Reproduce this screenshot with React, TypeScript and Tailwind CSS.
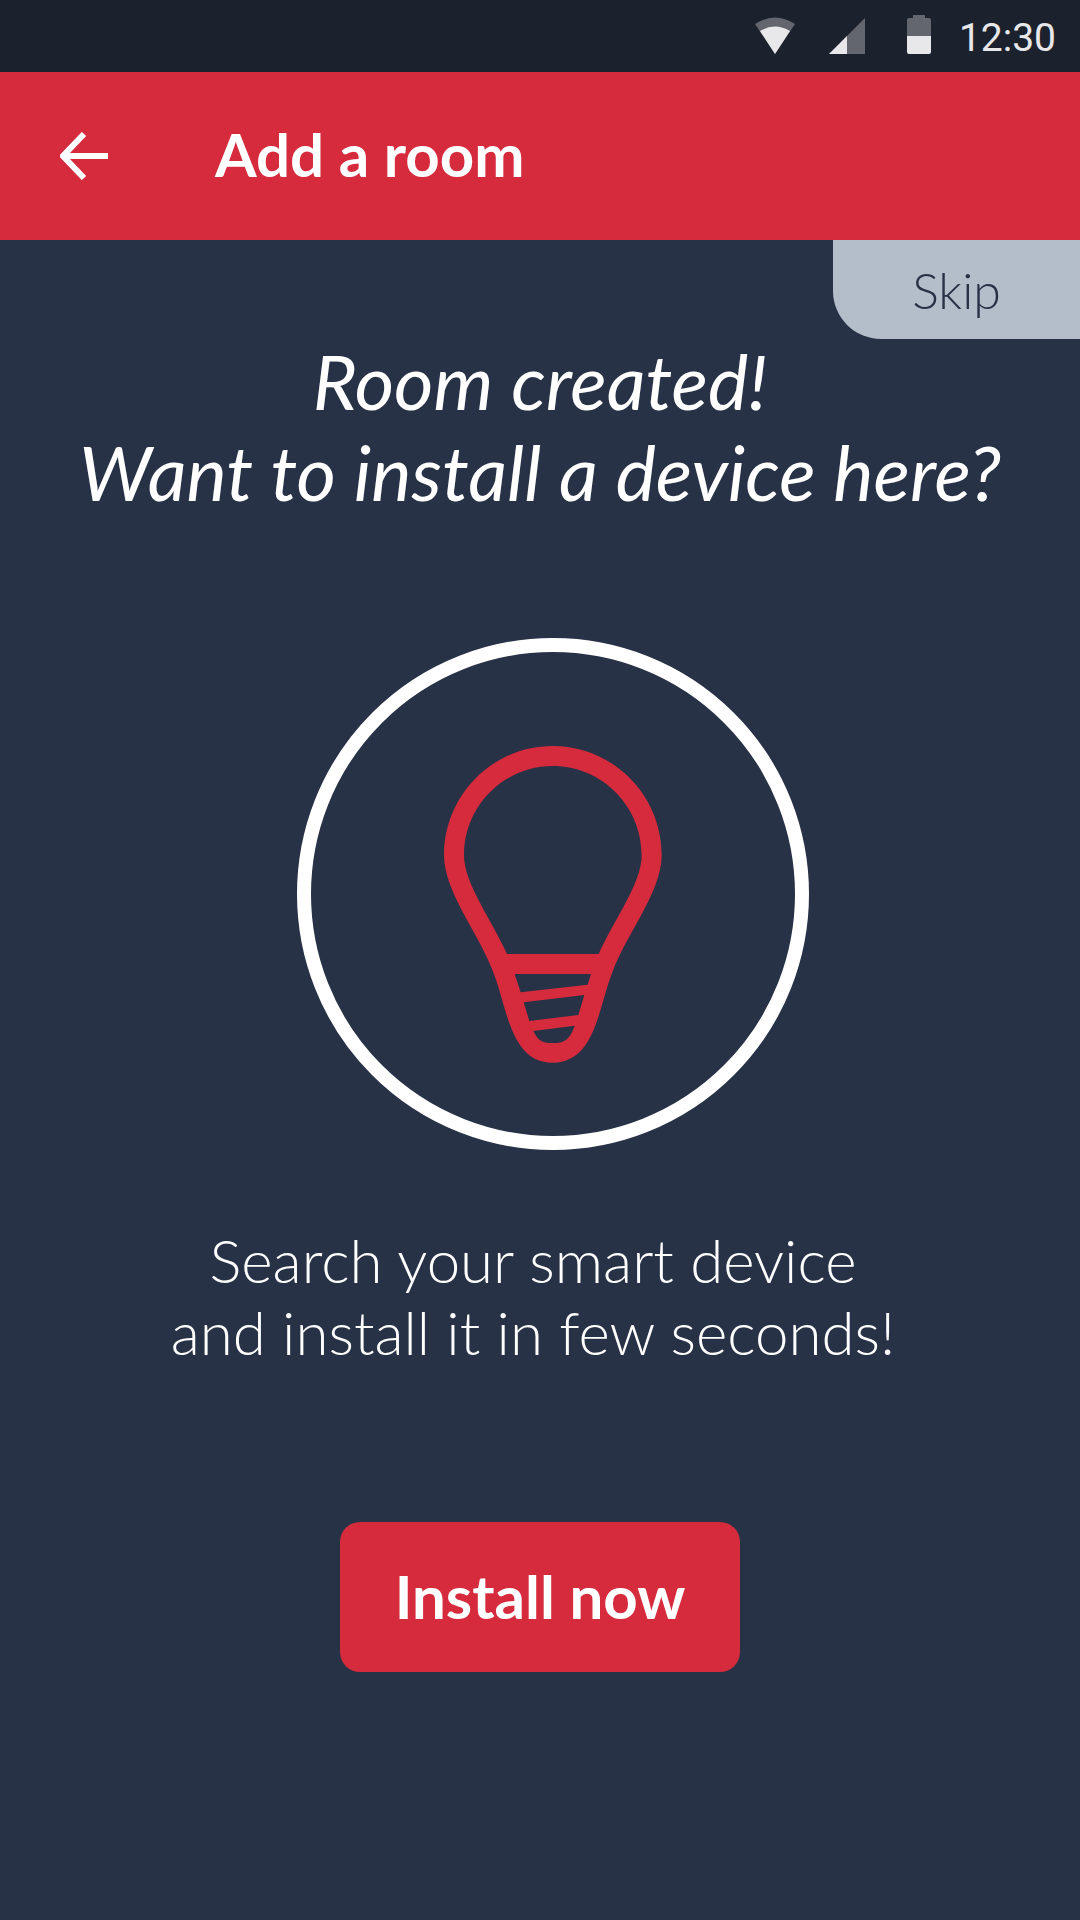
import React from "react";

function StatusBar() {
  return (
    <div className="flex h-[72px] items-center justify-end bg-[#1c222d] pr-6">
      <svg className="h-[72px] w-[210px]" viewBox="740 0 210 72" role="img" aria-label="Wi-Fi, mobile signal and battery">
        <path d="M754 24Q774 11 794 24L774 54Z" fill="#63666e" />
        <path d="M759 31Q774 22 789 31L774 54Z" fill="#e8e8ea" />
        <path d="M828 54L864 18V54Z" fill="#63666e" />
        <path d="M828 54L846 36V54Z" fill="#e8e8ea" />
        <path d="M906 36V20Q906 18 908 18H912V15H924V18H928Q930 18 930 20V36Z" fill="#63666e" />
        <path d="M906 36H930V52Q930 54 928 54H908Q906 54 906 52Z" fill="#e8e8ea" />
      </svg>
      <time className="pt-1 pl-2 font-[Roboto] text-[39px] leading-[68px] text-[#e8e8ea]">12:30</time>
    </div>
  );
}

function BulbIllustration() {
  return (
    <svg className="size-[512px]" viewBox="0 0 1536 1536" fill="none" aria-hidden="true">
      <circle cx="768" cy="768" r="747" stroke="#fff" strokeWidth="42" />
      <g transform="translate(369 276)">
        <path
          fill="#d52b3d"
          fillRule="evenodd"
          d="M398 48C579 48 725 195 725 376C725 487 617 615 576 730C535 835 525 998 398 998C272 998 262 835 221 730C180 615 72 487 72 376C72 195 218 48 398 48Z
             M398 108C251 108 132 228 132 376C132 460 213 566 261 672H536C584 566 665 460 665 376C665 228 546 108 398 108Z
             M284 732L302 787L503 764L513 732Z
             M311 817L328 873L475 855L493 795Z
             M340 903C356 938 373 939 398 939C424 939 446 938 464 887Z"
        />
      </g>
    </svg>
  );
}

export default function App() {
  return (
    <div className="flex min-h-screen flex-col bg-[#283246] font-[Lato] text-white">
      <StatusBar />
      <header className="flex h-[168px] items-center bg-[#d52b3d] pl-[60px]">
        <button type="button" aria-label="Back">
          <svg className="h-12 w-12" viewBox="0 0 48 48" fill="none" stroke="#fff" strokeWidth="6">
            <path d="M48 24H6M24 2L3 24L24 46" />
          </svg>
        </button>
        <h1 className="pb-1 pl-[107px] text-[60px] leading-[72px] font-bold">Add a room</h1>
      </header>
      <main className="flex flex-1 flex-col items-center">
        <button
          type="button"
          className="h-[99px] w-[247px] self-end rounded-bl-[48px] bg-[#b4bdca] text-[50px] leading-[60px] font-light text-[#283246]"
        >
          Skip
        </button>
        <h2 className="-mt-1 text-center text-[76px] leading-[91px] italic">
          Room created!
          <br />
          Want to install a device here?
        </h2>
        <div className="mt-[121px] pl-[26px]">
          <BulbIllustration />
        </div>
        <p className="mt-[74px] pr-[14px] text-center text-[60px] leading-[72px] font-light">
          Search your smart device
          <br />
          and install it in few seconds!
        </p>
        <button
          type="button"
          className="mt-[154px] h-[150px] w-[400px] rounded-[20px] bg-[#d52b3d] pb-[2px] text-[60px] leading-[72px] font-bold"
        >
          Install now
        </button>
      </main>
    </div>
  );
}
